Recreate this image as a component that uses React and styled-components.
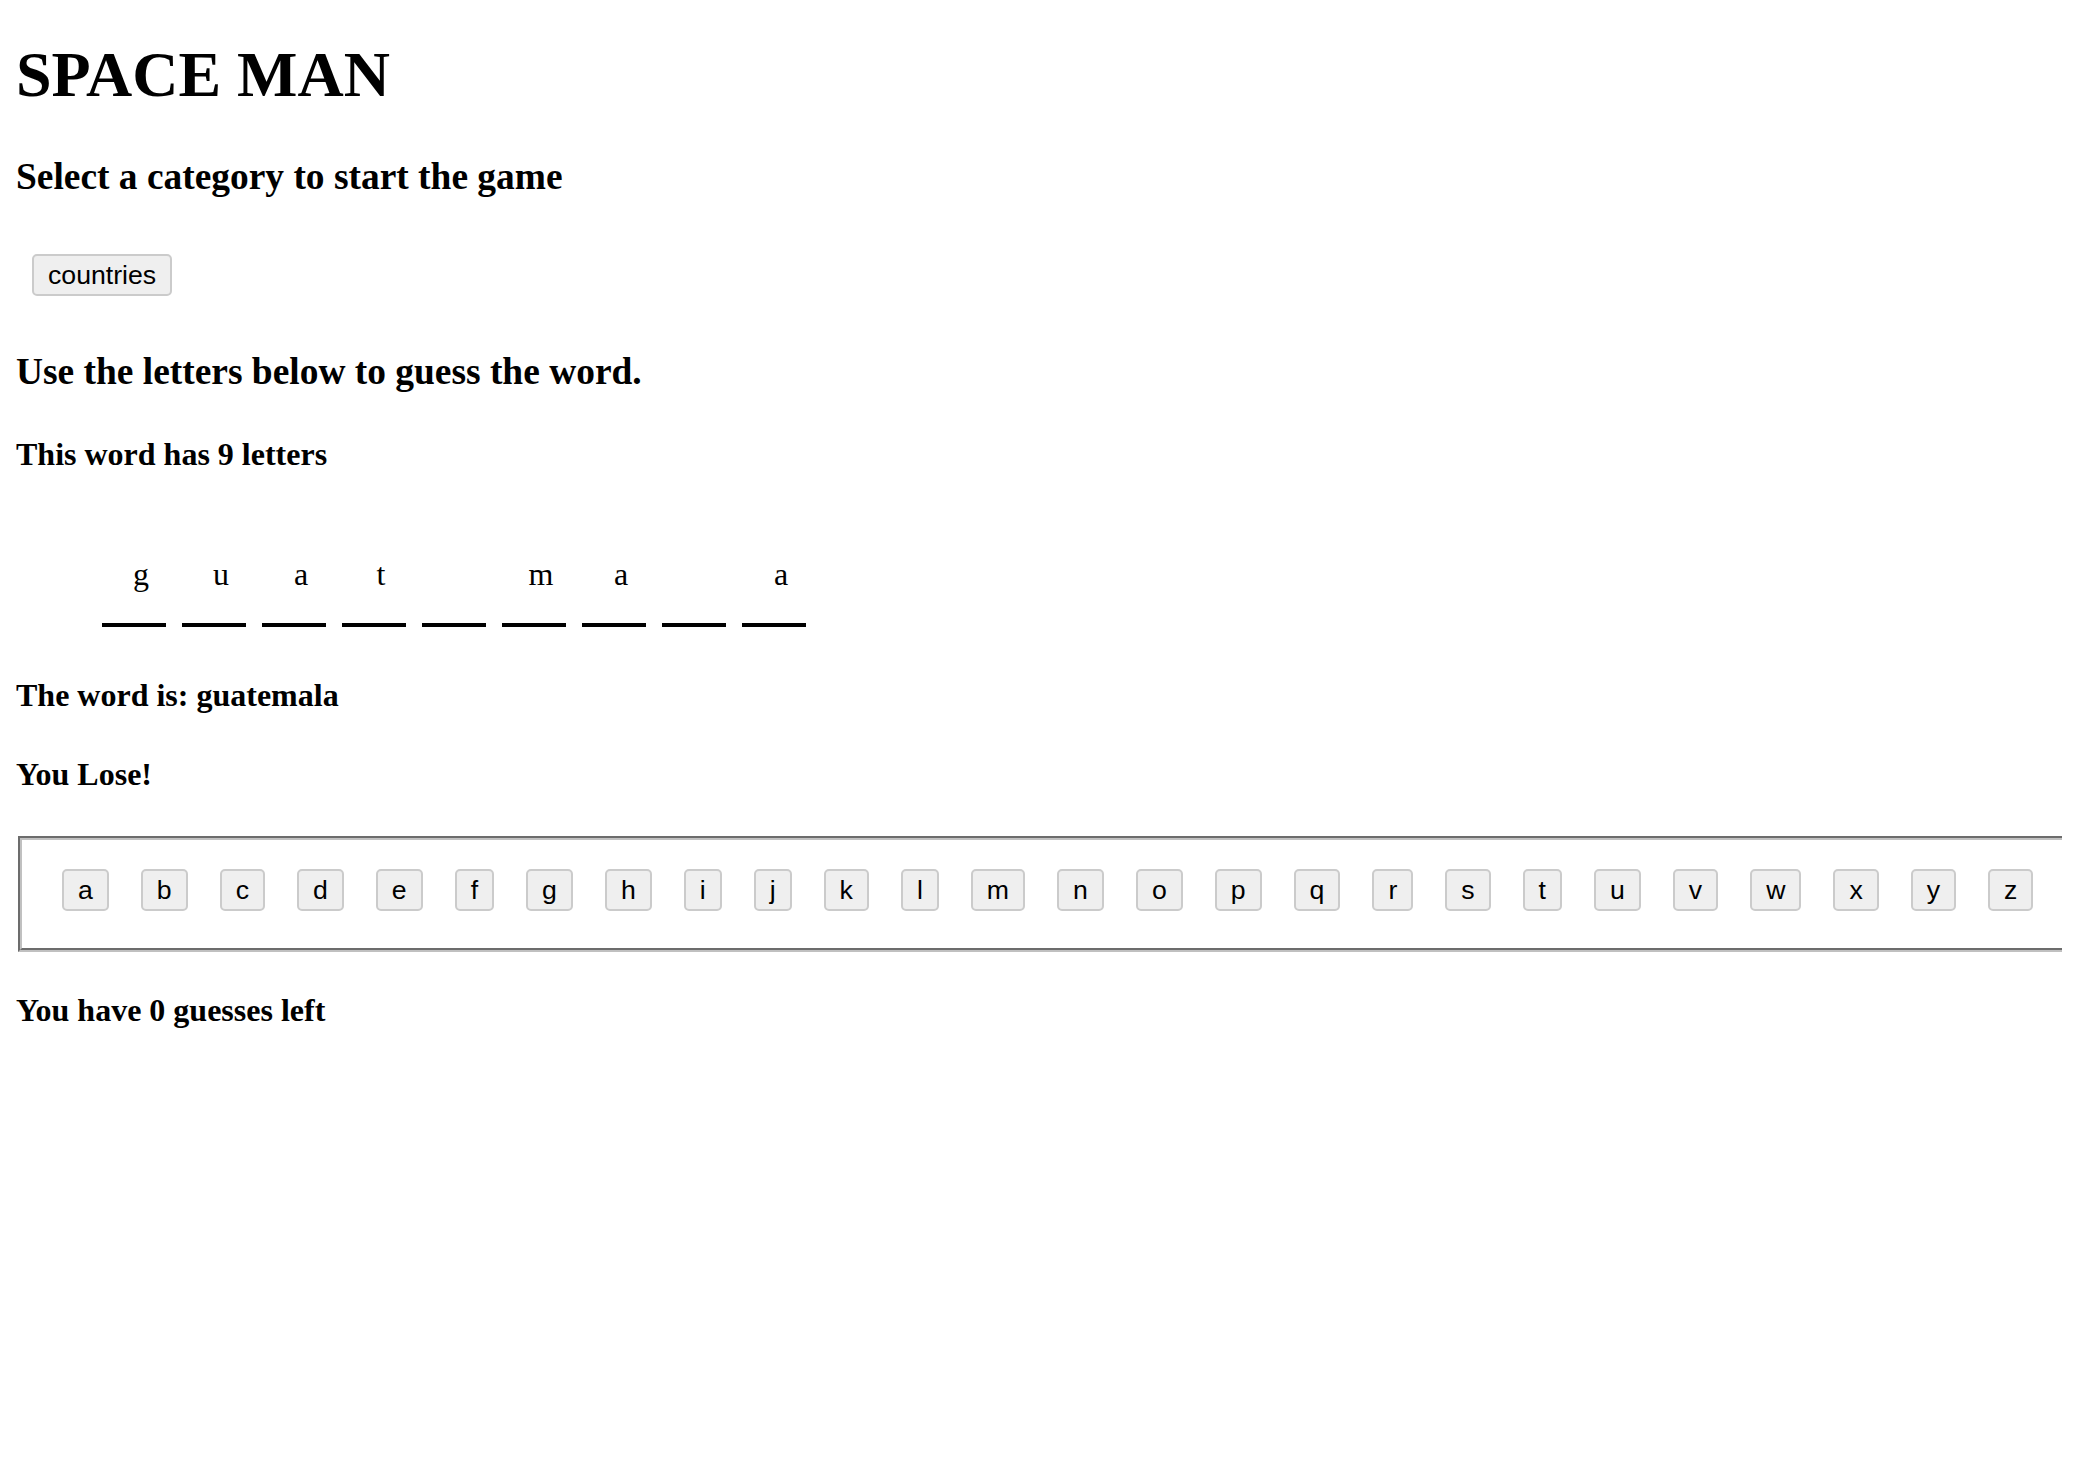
import React from "react";
import styled, { createGlobalStyle } from "styled-components";

const GlobalStyle = createGlobalStyle`
  html {
    background: #ffffff;
    overflow-x: hidden;
  }
  body {
    margin: 0 16px 16px;
    color: #000000;
    font-family: "Liberation Serif", "Times New Roman", serif;
  }
`;

const Page = styled.main`
  display: block;
`;

const Title = styled.h1`
  margin: 38px 0 43px;
  font-size: 64px;
  font-weight: bold;
  line-height: normal;
`;

const Heading = styled.h3`
  margin: 37.44px 0;
  font-size: 37.44px;
  font-weight: bold;
  line-height: normal;
`;

const SubHeading = styled.h4`
  margin: ${(p) => p.$top || "42.56px"} 0 42.56px;
  font-size: 32px;
  font-weight: bold;
  line-height: normal;
`;

const CategoryBar = styled.div`
  display: flex;
  padding-top: 2.5px;
  margin-bottom: 38.5px;
`;

const Button = styled.button`
  flex: none;
  margin: 16px;
  padding: 4px 14px;
  border: 2px solid #cbcbcb;
  border-radius: 5px;
  background: #efefef;
  color: #000000;
  font-family: "Liberation Sans", Arial, sans-serif;
  font-size: 26.67px;
  line-height: 30px;
  cursor: pointer;
`;

const WordRow = styled.div`
  display: flex;
  gap: 16px;
  margin: 84.4px 0 49.5px;
  padding-left: 86px;
`;

const Slot = styled.div`
  box-sizing: border-box;
  width: 64px;
  height: 70px;
  padding-left: 14px;
  border-bottom: 4px solid #000000;
  font-size: 32px;
  line-height: 35px;
  text-align: center;
`;

const Keyboard = styled.fieldset`
  margin: 42.6px -16px 0 2px;
  padding: 13.2px 0 20.4px 24px;
  border: 4px groove rgb(192, 192, 192);
  border-right: 0;
  min-width: 0;
`;

const KeyRow = styled.div`
  display: flex;
  flex-wrap: nowrap;
`;

const word = "guatemala";
const guessed = new Set(["g", "u", "a", "t", "m"]);
const alphabet = "abcdefghijklmnopqrstuvwxyz".split("");

export default function App() {
  return (
    <>
      <GlobalStyle />
      <Page>
        <Title>SPACE MAN</Title>
        <Heading>Select a category to start the game</Heading>
        <CategoryBar>
          <Button type="button">countries</Button>
        </CategoryBar>
        <Heading>Use the letters below to guess the word.</Heading>
        <SubHeading>This word has {word.length} letters</SubHeading>
        <WordRow>
          {word.split("").map((ch, i) => (
            <Slot key={i}>{guessed.has(ch) ? ch : ""}</Slot>
          ))}
        </WordRow>
        <SubHeading>The word is: {word}</SubHeading>
        <SubHeading>You Lose!</SubHeading>
        <Keyboard>
          <KeyRow>
            {alphabet.map((l) => (
              <Button type="button" key={l}>
                {l}
              </Button>
            ))}
          </KeyRow>
        </Keyboard>
        <SubHeading $top="40px">You have 0 guesses left</SubHeading>
      </Page>
    </>
  );
}
